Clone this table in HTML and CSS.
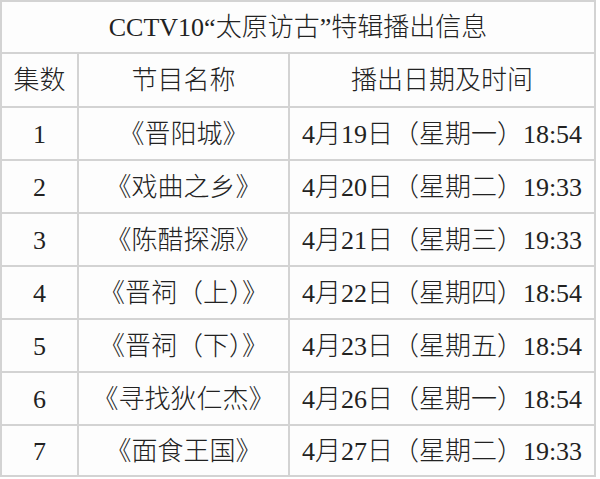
FILE: index.html
```html
<!DOCTYPE html>
<html lang="zh-CN">
<head>
<meta charset="utf-8">
<title>CCTV10“太原访古”特辑播出信息</title>
<link rel="stylesheet" href="styles.css">
</head>
<body>
<div class="sheet">
  <div class="cell title">CCTV10“太原访古”特辑播出信息</div>
  <div class="cell">集数</div>
  <div class="cell">节目名称</div>
  <div class="cell">播出日期及时间</div>

  <div class="cell">1</div>
  <div class="cell">《晋阳城》</div>
  <div class="cell">4月19日（星期一）18:54</div>

  <div class="cell">2</div>
  <div class="cell">《戏曲之乡》</div>
  <div class="cell">4月20日（星期二）19:33</div>

  <div class="cell">3</div>
  <div class="cell">《陈醋探源》</div>
  <div class="cell">4月21日（星期三）19:33</div>

  <div class="cell">4</div>
  <div class="cell">《晋祠（上）》</div>
  <div class="cell">4月22日（星期四）18:54</div>

  <div class="cell">5</div>
  <div class="cell">《晋祠（下）》</div>
  <div class="cell">4月23日（星期五）18:54</div>

  <div class="cell">6</div>
  <div class="cell">《寻找狄仁杰》</div>
  <div class="cell">4月26日（星期一）18:54</div>

  <div class="cell">7</div>
  <div class="cell">《面食王国》</div>
  <div class="cell">4月27日（星期二）19:33</div>
</div>
</body>
</html>
```

FILE: styles.css
```css
html, body {
  margin: 0;
  padding: 0;
  background: #ffffff;
}

.sheet {
  display: grid;
  grid-template-columns: 75px 209px 304px;
  grid-template-rows: 50px 52px repeat(6, 51px) 49px;
  gap: 2px;
  padding: 2px;
  width: 592px;
  background: #d3d3d3;
  font-family: "Liberation Serif", "Noto Sans CJK SC", serif;
  font-size: 26px;
  font-weight: 300;
  color: #222222;
}

.cell {
  background: #fdfdfd;
  display: flex;
  align-items: center;
  justify-content: center;
  white-space: nowrap;
  line-height: 1;
  padding-top: 2px;
}

.title {
  grid-column: 1 / 4;
  font-size: 26px;
}
```
